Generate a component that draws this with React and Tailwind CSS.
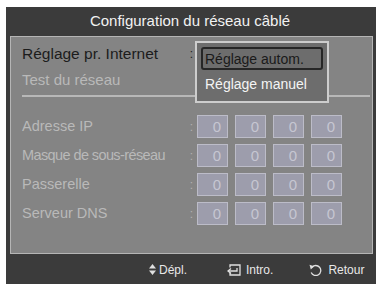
import React from "react";

const font = { fontFamily: '"Liberation Sans", Arial, sans-serif' };

function IpRow({ label, tight }) {
  return (
    <div className="flex items-center h-[23px]">
      <div className={"w-[166px] text-[14.5px] text-[#b9b9b9] leading-none whitespace-nowrap " + (tight ? "tracking-[-0.6px]" : "")}>{label}</div>
      <div className="w-[7px] text-center text-[12px] text-[#b0b0b0] leading-none">:</div>
      <div className="ml-[2px] flex gap-[7px]">
        {[0, 1, 2, 3].map((i) => (
          <div key={i} className="w-[31px] h-[23px] bg-[#9d9dac] border border-[#bcbcc8] flex items-center justify-end pr-[6px] text-[15px] text-[#c6c6d2] leading-none">0</div>
        ))}
      </div>
    </div>
  );
}

export default function App() {
  return (
    <div className="w-[376px] h-[284px] bg-white pt-[7px] pl-[6px] overflow-hidden" style={font}>
      <div className="w-[370px] h-[277px] bg-[#3b3b3b] flex flex-col">
        <div className="h-[29px] flex items-center justify-center text-[15px] text-[#f2f2f2] pr-[2px]">
          Configuration du réseau câblé
        </div>
        <div className="relative ml-[4px] w-[363px] h-[218px] bg-[#848484] border border-[#b5b5b5] flex flex-col">
          <div className="pt-[3px] pl-[11px]">
            <div className="h-[27px] flex items-center">
              <div className="w-[166px] text-[15.5px] text-[#1c1c1c] leading-none whitespace-nowrap">Réglage pr. Internet</div>
              <div className="w-[7px] text-center text-[12px] text-[#222] leading-none">:</div>
            </div>
          </div>
          <div className="ml-[11px] mr-[2px] h-[30px] pb-[3px] border-b-2 border-[#b8b8b8] flex items-center">
            <div className="text-[15px] text-[#b9b9b9] leading-none">Test du réseau</div>
          </div>
          <div className="mt-[18px] pl-[11px] flex flex-col gap-[6px]">
            <IpRow label="Adresse IP" />
            <IpRow label="Masque de sous-réseau" tight />
            <IpRow label="Passerelle" />
            <IpRow label="Serveur DNS" />
          </div>

          <div className="absolute left-[184px] top-[4px] w-[134px] h-[62px] border-2 border-[#cdcdcd] bg-[#6d6d6d] p-[4px] flex flex-col">
            <div className="h-[24px] border-2 border-[#262626] rounded-[3px] flex items-center pl-[2px] text-[14px] text-[#1a1a1a] leading-none">
              Réglage autom.
            </div>
            <div className="h-[28px] flex items-center pl-[4px] text-[14px] text-[#f4f4f4] leading-none">
              Réglage manuel
            </div>
          </div>
        </div>
        <div className="flex-1 flex items-center text-[12px] text-[#e8e8e8] leading-none pl-[143px] pt-[1px]">
          <svg width="7" height="11" viewBox="0 0 7 11" className="mr-[3px]">
            <polygon points="3.5,0 7,4.5 0,4.5" fill="#e0e0e0" />
            <polygon points="0,6.5 7,6.5 3.5,11" fill="#e0e0e0" />
          </svg>
          <span>Dépl.</span>
          <svg width="14" height="12" viewBox="0 0 14 12" className="ml-[40px] mr-[5px]">
            <path d="M3 3.5V1h10v10H3V8.5" fill="none" stroke="#e0e0e0" strokeWidth="1.3" />
            <path d="M10 4v3H1" fill="none" stroke="#e0e0e0" strokeWidth="1.3" />
            <path d="M4 4.5L1 7l3 2.5" fill="none" stroke="#e0e0e0" strokeWidth="1.3" />
          </svg>
          <span>Intro.</span>
          <svg width="13" height="12" viewBox="0 0 13 12" className="ml-[36px] mr-[6px]">
            <path d="M3 3.2A5 5 0 1 1 2.2 8.5" fill="none" stroke="#e0e0e0" strokeWidth="1.3" />
            <polygon points="0.5,0.8 5.2,2.2 1.8,5.6" fill="#e0e0e0" />
          </svg>
          <span>Retour</span>
        </div>
      </div>
    </div>
  );
}
